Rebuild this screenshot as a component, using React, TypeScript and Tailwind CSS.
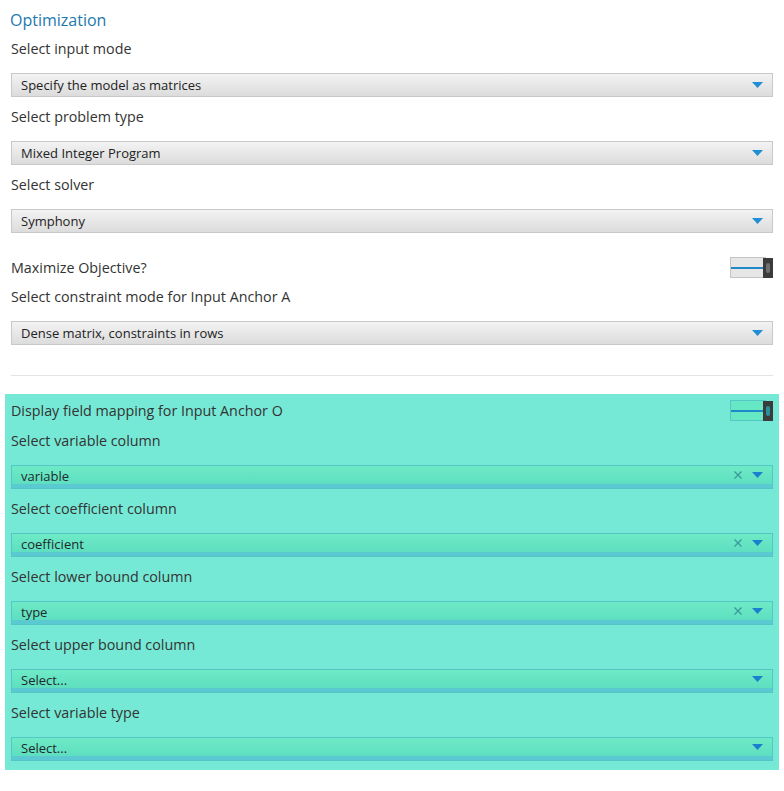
import React from "react";

const font = { fontFamily: '"Open Sans", "Noto Sans", sans-serif' };

function Caret({ teal }: { teal?: boolean }) {
  return (
    <svg width="11" height="6" viewBox="0 0 11 6" className="shrink-0">
      <path d="M0 0 H11 L5.5 6 Z" fill={teal ? "#1a80cc" : "#1e8fd2"} />
    </svg>
  );
}

function Cross() {
  return (
    <svg width="8" height="8" viewBox="0 0 8 8" className="shrink-0 mr-[10px]">
      <path d="M0.5 0.5 L7.5 7.5 M7.5 0.5 L0.5 7.5" stroke="#3b9a9c" strokeWidth="1.3" />
    </svg>
  );
}

function GraySelect({ value }: { value: string }) {
  return (
    <div className="mt-[14px] h-[24px] w-full border border-[#c9c9c9] bg-gradient-to-b from-[#f3f3f3] to-[#dcdcdc] flex items-center pl-[9px] pr-[9px]">
      <span className="flex-1 text-[13px] text-[#222] leading-none">{value}</span>
      <Caret />
    </div>
  );
}

function TealSelect({ value, clear }: { value: string; clear?: boolean }) {
  return (
    <div className="mt-[14px] h-[24px] w-full border border-[#55c6c6] flex flex-col">
      <div className="flex-1 bg-gradient-to-b from-[#6eeac6] to-[#5edfc0] flex items-center pl-[9px] pr-[9px]">
        <span className="flex-1 text-[13px] text-[#1f2a2a] leading-none pt-[2px]">{value}</span>
        {clear && <Cross />}
        <Caret teal />
      </div>
      <div className="h-[4px] bg-[#5bc9d2]" />
    </div>
  );
}

function Label({ children, first }: { children: React.ReactNode; first?: boolean }) {
  return (
    <div className={`${first ? "mt-[8px]" : "mt-[10px]"} h-[20px] leading-[20px] text-[14.3px] text-[#333]`}>{children}</div>
  );
}

function Toggle({ teal }: { teal?: boolean }) {
  return (
    <div className="relative w-[43px] h-[21px]">
      <div
        className={`absolute left-0 top-0 w-[36px] h-[21px] border ${
          teal ? "border-[#55c6c6] bg-[#66e8c4]" : "border-[#c4c4c4] bg-[#e6e6e6]"
        }`}
      />
      <div className="absolute left-[1px] top-[10px] w-[34px] h-[2px] bg-[#1e88c8]" />
      <div className="absolute right-0 top-[1px] w-[10px] h-[20px] bg-[#3b3b3b] flex items-center justify-center">
        <div className={`w-[4px] h-[10px] rounded-full ${teal ? "bg-[#2a8f9c]" : "bg-[#6f6f6f]"}`} />
      </div>
    </div>
  );
}

export default function App() {
  return (
    <div className="w-[784px] h-[791px] bg-white" style={font}>
      <div className="pl-[11px] pr-[11px]">
        <div className="pt-[9px] h-[31px] leading-[22px] text-[16px] text-[#1c79b0] -ml-[1px]">Optimization</div>
        <Label first>Select input mode</Label>
        <GraySelect value="Specify the model as matrices" />
        <Label>Select problem type</Label>
        <GraySelect value="Mixed Integer Program" />
        <Label>Select solver</Label>
        <GraySelect value="Symphony" />
        <div className="mt-[22px] flex items-center justify-between h-[24px]">
          <span className="text-[14.3px] text-[#333] leading-[20px] pt-[2px]">Maximize Objective?</span>
          <Toggle />
        </div>
        <Label first>Select constraint mode for Input Anchor A</Label>
        <GraySelect value="Dense matrix, constraints in rows" />
        <div className="mt-[30px] h-px bg-[#e3e3e3]" />
      </div>
      <div className="mt-[18px] ml-[5px] w-[774px] bg-[#76e9d6] pl-[6px] pr-[6px] pt-[6px] pb-[9px]">
        <div className="flex items-center justify-between h-[21px]">
          <span className="text-[14.3px] text-[#333] leading-[20px]">Display field mapping for Input Anchor O</span>
          <Toggle teal />
        </div>
        <Label>Select variable column</Label>
        <TealSelect value="variable" clear />
        <Label>Select coefficient column</Label>
        <TealSelect value="coefficient" clear />
        <Label>Select lower bound column</Label>
        <TealSelect value="type" clear />
        <Label>Select upper bound column</Label>
        <TealSelect value="Select..." />
        <Label>Select variable type</Label>
        <TealSelect value="Select..." />
      </div>
    </div>
  );
}
